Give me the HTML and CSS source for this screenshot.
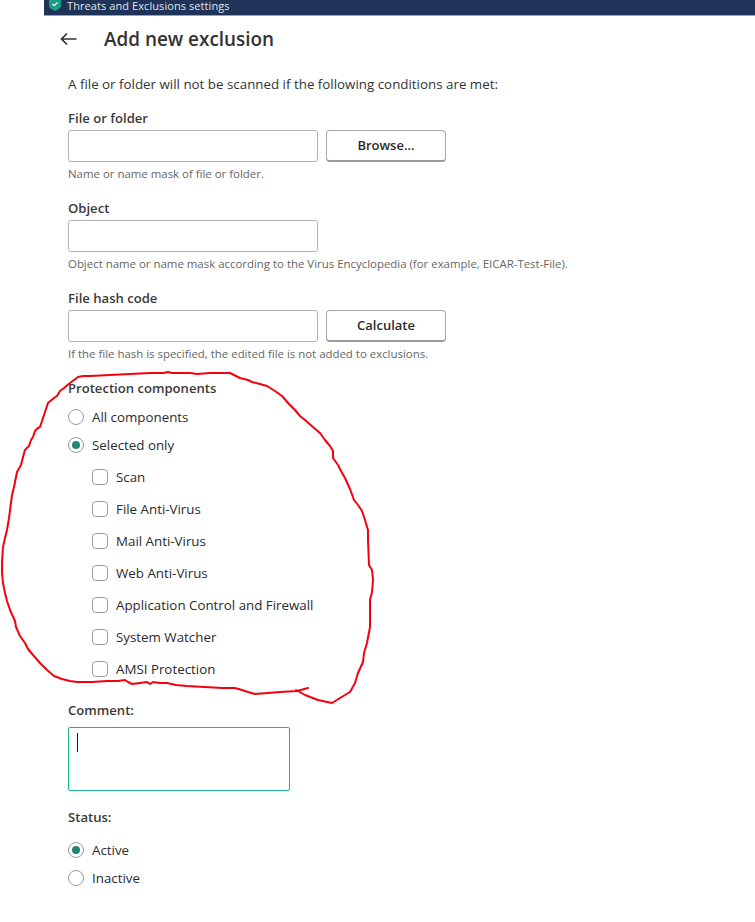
FILE: index.html
```html
<!DOCTYPE html>
<html lang="en">
<head>
<meta charset="utf-8">
<title>Add new exclusion</title>
<link rel="stylesheet" href="styles.css">
</head>
<body>
<div class="page">
  <header class="titlebar">
    <svg class="shield" width="12" height="11" viewBox="0 0 12 11"><path d="M0 0h12v6c0 2-3 3.500-6 5-3-1.500-6-3-6-5z" fill="#1a9d84"/><path d="M3.500 3.800l1.800 1.800 3.200-3.200" fill="none" stroke="#fff" stroke-width="1.200"/></svg>
    <span class="titlebar-text">Threats and Exclusions settings</span>
  </header>
  <div class="heading">
    <svg class="back" width="17" height="14" viewBox="0 0 17 14"><path d="M16.500 7H1.500M7 1.500 1.500 7 7 12.500" fill="none" stroke="#333" stroke-width="1.700"/></svg>
    <h1>Add new exclusion</h1>
  </div>
  <main class="content">
    <p class="intro">A file or folder will not be scanned if the following conditions are met:</p>

    <section class="field first-field">
      <label class="label">File or folder</label>
      <div class="row"><input class="input" type="text"><button class="btn">Browse...</button></div>
      <p class="hint">Name or name mask of file or folder.</p>
    </section>
    <section class="field">
      <label class="label">Object</label>
      <div class="row"><input class="input" type="text"></div>
      <p class="hint">Object name or name mask according to the Virus Encyclopedia (for example, EICAR-Test-File).</p>
    </section>
    <section class="field">
      <label class="label">File hash code</label>
      <div class="row"><input class="input" type="text"><button class="btn">Calculate</button></div>
      <p class="hint">If the file hash is specified, the edited file is not added to exclusions.</p>
    </section>

    <section class="components">
      <div class="label">Protection components</div>
      <div class="radios">
        <div class="opt"><span class="radio"></span>All components</div>
        <div class="opt"><span class="radio on"></span>Selected only</div>
      </div>
      <div class="checks">
        <div class="opt"><span class="check"></span>Scan</div>
        <div class="opt"><span class="check"></span>File Anti-Virus</div>
        <div class="opt"><span class="check"></span>Mail Anti-Virus</div>
        <div class="opt"><span class="check"></span>Web Anti-Virus</div>
        <div class="opt"><span class="check"></span>Application Control and Firewall</div>
        <div class="opt"><span class="check"></span>System Watcher</div>
        <div class="opt"><span class="check"></span>AMSI Protection</div>
      </div>
    </section>

    <section class="comment">
      <div class="label">Comment:</div>
      <div class="textarea"><span class="caret"></span></div>
    </section>

    <section class="status">
      <div class="label">Status:</div>
      <div class="radios status-radios">
        <div class="opt"><span class="radio on"></span>Active</div>
        <div class="opt"><span class="radio"></span>Inactive</div>
      </div>
    </section>
  </main>
  <svg class="scribble" width="755" height="922" viewBox="0 0 755 922" aria-hidden="true">
    <path d="M308 688L297 691 280 692 268 693 255 694 248 692 242 690 235 688 222 688 205 687 187 686 176 685 167 683 160 683 153 682 150 684 147 682 140 683 132 684 128 682 125 680 118 681 107 681 92 682 77 682 70 681 62 679 54 676 47 670 40 663 33 655 28 649 25 643 20 636 16 627 15 621 10 610 7 601 5 593 3 583 2 573 2 562 3 547 5 538 7 530 9 518 12 495 14 487 17 472 21 465 23 457 25 450 29 446 31 440 33 437 35 431 38 428 40 427 44 415 48 403 54 398 57 396 60 391 64 388 70 383 74 380 78 377 83 376 90 376 110 375 130 374 150 373 163 373 168 372 172 373 180 373 190 373 197 374 210 373 230 373 234 375 240 378 248 380 252 382 260 384 267 386 275 391 282 396 289 404 295 410 300 416 305 420 313 427 320 433 325 440 330 446 333 451 333 458 338 465 341 471 345 478 350 489 354 500 358 505 362 511 365 520 368 530 368 540 369 565 372 570 373 580 372 592 370 600 370 627 367 643 364 653 363 662 358 673 355 683 350 692 340 698 332 703 318 700 305 695 296 690"/>
  </svg>
</div>
</body>
</html>
```

FILE: styles.css
```css
* { box-sizing: border-box; }
html, body { margin: 0; padding: 0; background: #fff; }
body { font-family: "Open Sans", "Noto Sans", sans-serif; color: #2b2b2b; }
.page { position: relative; width: 755px; height: 922px; overflow: hidden; }
.titlebar { margin-left: 44px; height: 16px; background: #1f3358; border-bottom: 1px solid #9aa3b3; display: flex; align-items: flex-start; gap: 6px; padding-left: 5px; color: #dfe5ee; }
.shield { flex: none; }
.titlebar-text { font-size: 11px; line-height: 11px; letter-spacing: .08px; }
.heading { display: flex; align-items: center; height: 46px; padding-left: 60px; }
.back { margin-right: 27px; }
h1 { margin: 0; font-size: 18.9px; line-height: 46px; font-weight: 600; color: #333; }
.content { padding: 13px 0 0 68px; }
.intro { margin: 0; font-size: 13.35px; line-height: 18px; color: #333; }
.field { margin-top: 17px; }
.first-field { margin-top: 16px; }
.label { display: block; font-size: 13.1px; line-height: 18px; font-weight: 600; color: #3a3a3a; }
.row { display: flex; gap: 8px; margin-top: 3px; }
.input { width: 250px; height: 32px; border: 1px solid #b3b3b3; border-radius: 3px; background: #fff; padding: 0; }
.btn { width: 120px; height: 32px; border: 1px solid #a8a8a8; border-bottom: 2px solid #9a9a9a; border-radius: 4px; background: #fff; font: 600 13px "Open Sans", sans-serif; color: #2b2b2b; padding: 0 0 2px; }
.hint { margin: 4px 0 0; font-size: 11.43px; line-height: 16px; color: #666; }
.components { margin-top: 17px; }
.radios { display: flex; flex-direction: column; margin-top: 6px; }
.opt { display: flex; align-items: center; font-size: 13.33px; line-height: 18px; height: 28px; color: #2b2b2b; }
.radio { width: 16px; height: 16px; border: 1px solid #9b9b9b; border-radius: 50%; margin-right: 8px; flex: none; display: flex; align-items: center; justify-content: center; background: #fff; }
.radio.on::after { content: ""; width: 8px; height: 8px; border-radius: 50%; background: #1f8a70; }
.checks { margin-top: 2px; padding-left: 24px; }
.checks .opt { height: 32px; }
.check { width: 16px; height: 16px; border: 1px solid #9b9b9b; border-radius: 4px; margin-right: 8px; flex: none; background: #fff; }
.comment { margin-top: 16px; }
.textarea { width: 222px; height: 64px; margin-top: 8px; border: 1px solid #17b394; border-radius: 2px; padding: 5px 0 0 8px; background: #fff; }
.caret { display: block; width: 1px; height: 19px; background: #222; }
.status { margin-top: 17px; }
.status-radios { margin-top: 10px; }
.scribble { position: absolute; left: 0; top: 0; pointer-events: none; }
.scribble path { fill: none; stroke: #f5000f; stroke-width: 2; stroke-linejoin: round; stroke-linecap: round; }
```
